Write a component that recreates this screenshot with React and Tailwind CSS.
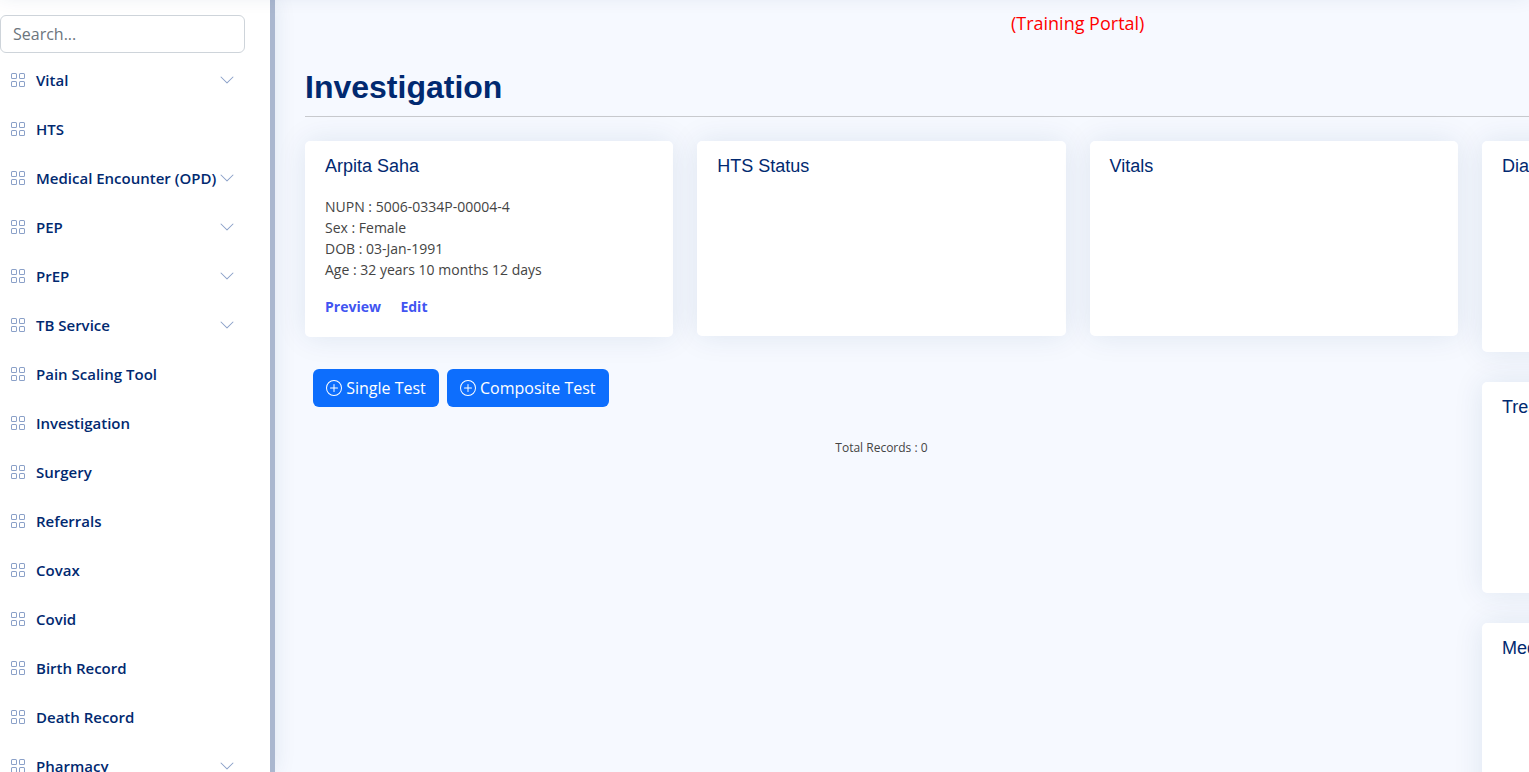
import { BsGrid, BsChevronDown, BsPlusCircle } from "react-icons/bs";

const NAV_ITEMS = [
  { label: "Vital", expandable: true },
  { label: "HTS" },
  { label: "Medical Encounter (OPD)", expandable: true },
  { label: "PEP", expandable: true },
  { label: "PrEP", expandable: true },
  { label: "TB Service", expandable: true },
  { label: "Pain Scaling Tool" },
  { label: "Investigation" },
  { label: "Surgery" },
  { label: "Referrals" },
  { label: "Covax" },
  { label: "Covid" },
  { label: "Birth Record" },
  { label: "Death Record" },
  { label: "Pharmacy", expandable: true },
];

function Sidebar() {
  return (
    <aside className="relative z-10 flex h-full w-[275px] shrink-0 overflow-hidden bg-white shadow-[0_0_20px_rgba(1,60,112,0.1)]">
      <div className="w-[270px] shrink-0 pt-[15px]">
        <input
          type="text"
          placeholder="Search..."
          className="block h-[38px] w-[245px] rounded-md border border-[#ced4da] bg-white px-3 text-base text-[#212529] placeholder:text-[#6c757d]"
        />
        <ul className="mt-[5px] flex w-[250px] flex-col gap-[5px]">
          {NAV_ITEMS.map((item) => (
            <li key={item.label}>
              <a
                href="#"
                className="flex h-[44px] items-center pr-[15px] pl-[10px] text-[15px] font-semibold whitespace-nowrap text-[#012970]"
              >
                <BsGrid className="mr-[10px] size-4 shrink-0 text-[#8aa0c8]" />
                <span>{item.label}</span>
                {item.expandable && (
                  <BsChevronDown className="mb-px ml-auto size-4 shrink-0 text-[#8aa0c8]" />
                )}
              </a>
            </li>
          ))}
        </ul>
      </div>
      <div className="w-[5px] bg-[#aab7cf]" />
    </aside>
  );
}

function Card({ title, className, children }) {
  return (
    <section
      className={`rounded-[5px] bg-white px-5 shadow-[0_0_30px_rgba(1,60,112,0.1)] ${className}`}
    >
      <h5 className="pt-[14px] font-['Liberation_Sans',Arial,sans-serif] text-lg leading-[22px] text-[#012970]">
        {title}
      </h5>
      {children}
    </section>
  );
}

function TestButton({ children }) {
  return (
    <button className="flex h-[38px] items-center gap-[4.2px] rounded-md bg-[#0d6efd] px-[13px] text-base text-white">
      <BsPlusCircle className="size-4" />
      {children}
    </button>
  );
}

export default function App() {
  return (
    <div className="flex h-[772px] overflow-hidden bg-[#f6f9ff] font-['Open_Sans',sans-serif] text-[#444444]">
      <div className="absolute -top-[66px] left-0 z-20 h-[60px] w-full shadow-[0_2px_20px_rgba(1,60,112,0.1)]" />
      <Sidebar />
      <main className="w-[1575.33px] shrink-0 pl-[30px]">
        <p className="pt-[10px] text-center text-lg leading-[27px] text-[#ff0000]">
          (Training Portal)
        </p>
        <h1 className="mt-[31px] font-['Liberation_Sans',Arial,sans-serif] text-[32px] leading-[38px] font-bold text-[#012970]">
          Investigation
        </h1>
        <hr className="mt-[10px] border-t border-[#c8cace]" />
        <div className="mt-6 flex gap-6">
          <div className="w-[1152.9px] shrink-0">
            <div className="grid grid-cols-3 items-start gap-6">
              <Card title="Arpita Saha" className="h-[196px]">
                <div className="mt-[19px] text-sm leading-[21px]">
                  <p>NUPN : 5006-0334P-00004-4</p>
                  <p>Sex : Female</p>
                  <p>DOB : 03-Jan-1991</p>
                  <p>Age : 32 years 10 months 12 days</p>
                </div>
                <div className="mt-4 flex gap-[19.5px] text-sm leading-[21px] font-bold text-[#4154f1]">
                  <a href="#">Preview</a>
                  <a href="#">Edit</a>
                </div>
              </Card>
              <Card title="HTS Status" className="h-[195px]" />
              <Card title="Vitals" className="h-[195px]" />
            </div>
            <div className="mt-8 flex gap-2 pl-2">
              <TestButton>Single Test</TestButton>
              <TestButton>Composite Test</TestButton>
            </div>
            <p className="mt-8 text-center text-xs leading-[18px]">Total Records : 0</p>
          </div>
          <div className="flex w-[368.33px] shrink-0 flex-col gap-[30px]">
            <Card title="Diagnosis" className="h-[211px]" />
            <Card title="Treatment Plan" className="h-[211px]" />
            <Card title="Medications" className="h-[211px]" />
          </div>
        </div>
      </main>
    </div>
  );
}
